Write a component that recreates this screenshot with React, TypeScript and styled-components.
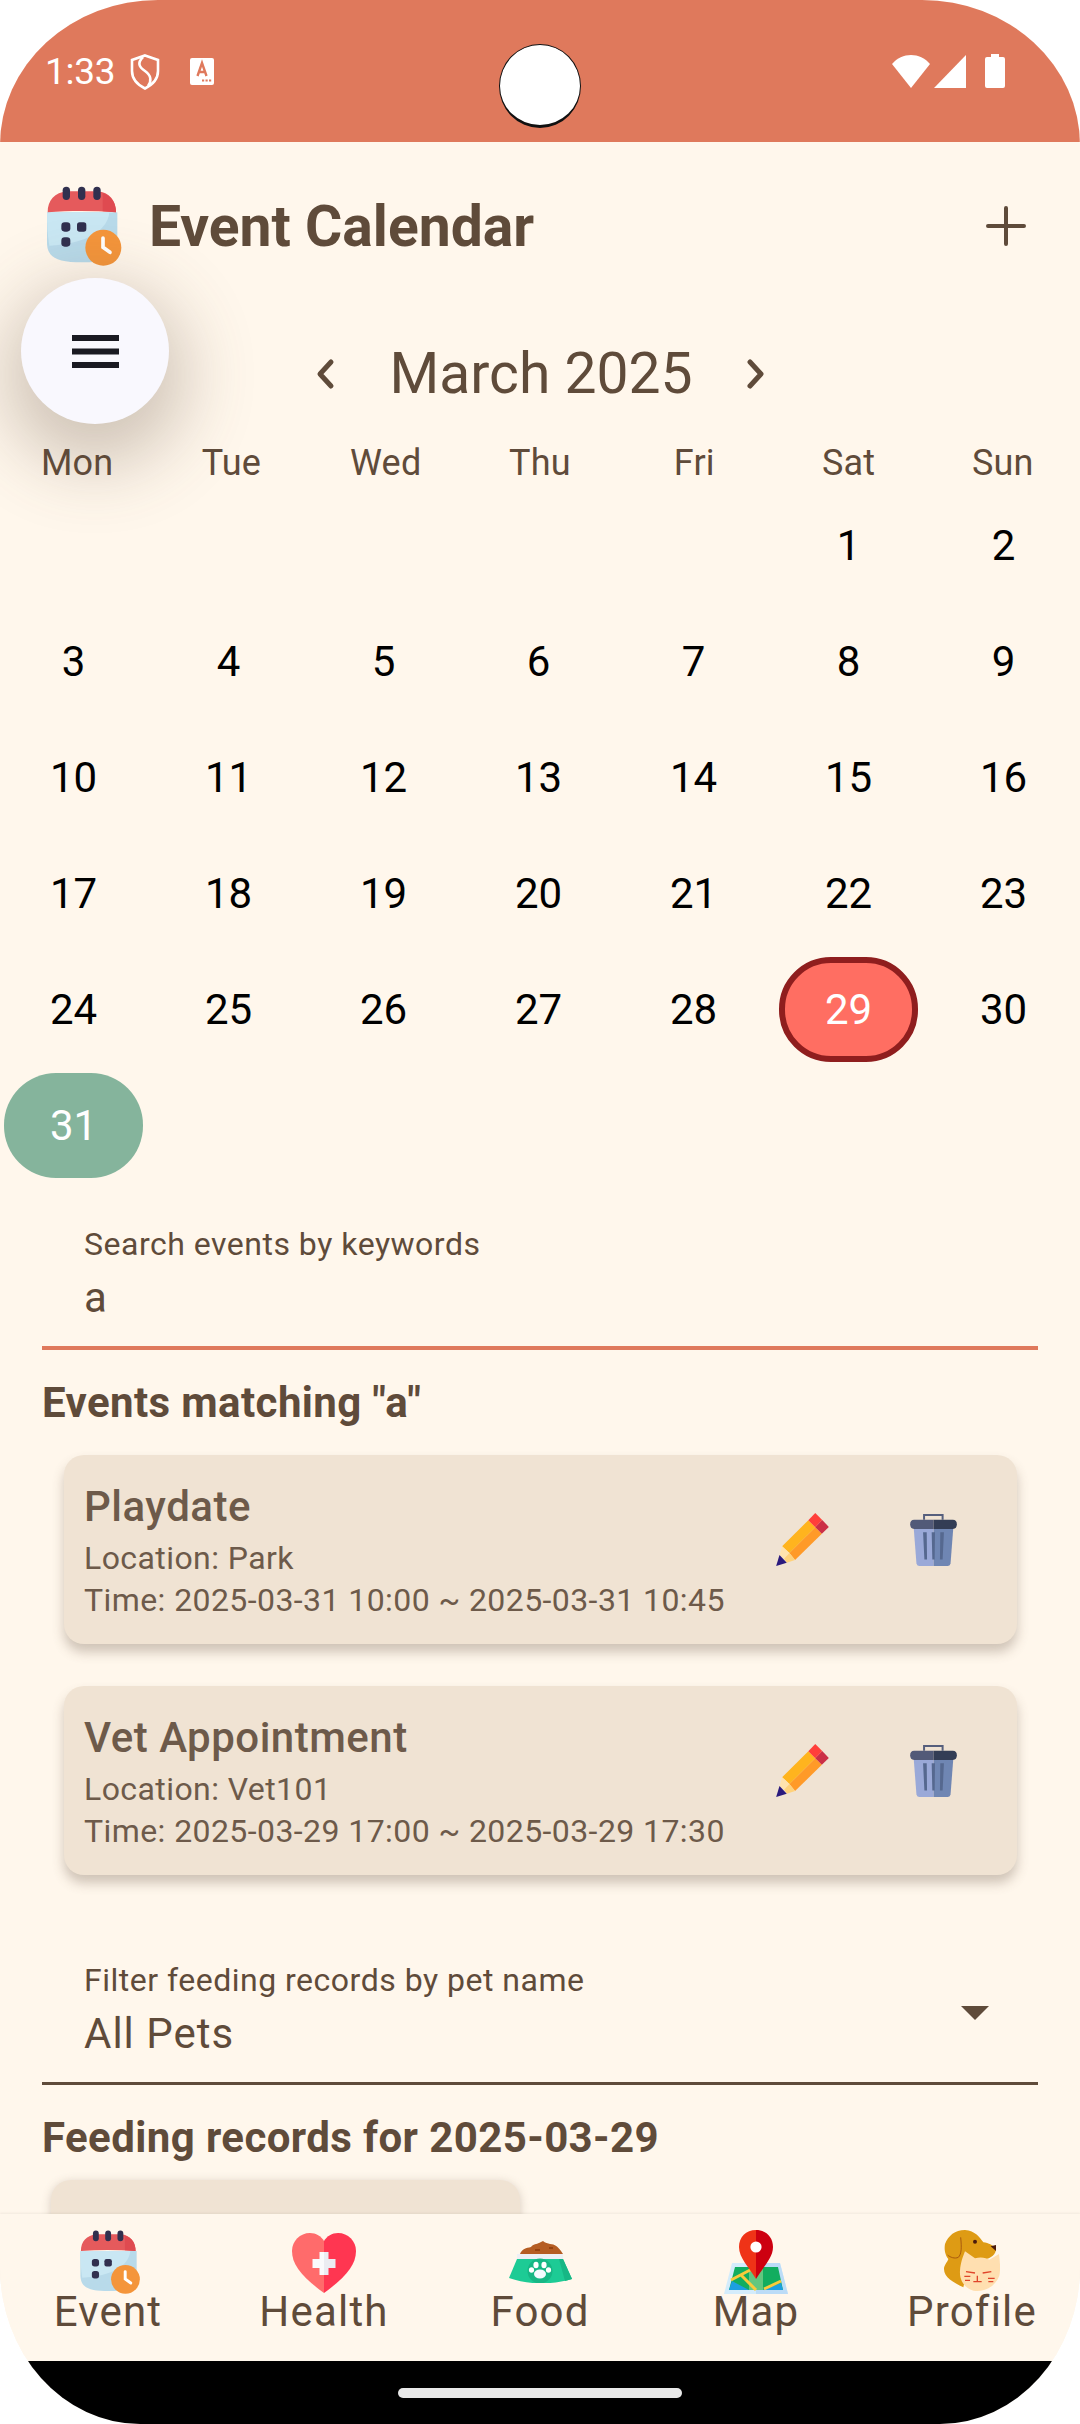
import { FC } from "react";
import styled, { createGlobalStyle } from "styled-components";

const GlobalStyle = createGlobalStyle`
  html, body {
    margin: 0;
    padding: 0;
    background: #fff;
  }
  body {
    font-family: Roboto, "Noto Sans", sans-serif;
  }
`;

const BROWN = "#5f4b3a";
const CORAL = "#df795c";
const CREAM = "#fff7ec";

const Phone = styled.div`
  position: relative;
  width: 1080px;
  height: 2424px;
  display: flex;
  flex-direction: column;
  overflow: hidden;
  background: ${CREAM};
  border-radius: 158px 158px 140px 140px / 145px 145px 157px 157px;
`;

const StatusBar = styled.div`
  position: relative;
  flex: 0 0 142px;
  display: flex;
  align-items: flex-start;
  justify-content: space-between;
  box-sizing: border-box;
  padding: 54px 75px 0 45px;
  background: ${CORAL};
  color: #fff;
`;

const StatusLeft = styled.div`
  display: flex;
  align-items: center;
  height: 35px;
`;

const Clock = styled.span`
  font-size: 37px;
  line-height: 35px;
  width: 85px;
  letter-spacing: -0.3px;
`;

const StatusRight = styled.div`
  display: flex;
  align-items: center;
`;

const ShieldSlot = styled.div`
  display: flex;
  width: 60px;
`;

const WifiSlot = styled.div`
  display: flex;
  width: 42px;
`;

const SignalSlot = styled.div`
  display: flex;
  width: 51px;
`;

const Camera = styled.div`
  position: absolute;
  left: 499px;
  top: 44px;
  width: 82px;
  height: 84px;
  box-sizing: border-box;
  border-radius: 50%;
  background: #fff;
  border: 1px solid #111;
  border-bottom-width: 3px;
`;

const Content = styled.main`
  flex: 1;
  min-height: 0;
  position: relative;
  overflow: hidden;
`;

const TopBar = styled.header`
  display: flex;
  align-items: center;
  height: 78px;
  margin-top: 45px;
  padding: 0 54px 0 46px;
`;

const AppTitle = styled.h1`
  flex: 1;
  margin: 1px 0 0 27px;
  font-size: 57px;
  font-weight: 700;
  line-height: 78px;
  color: ${BROWN};
`;

const MenuFab = styled.button`
  position: absolute;
  left: 21px;
  top: 136px;
  width: 148px;
  height: 146px;
  padding: 0;
  border: 0;
  border-radius: 50%;
  background: #f9f8fe;
  box-shadow: 0 24px 70px 16px rgba(95, 75, 58, 0.3);
  display: flex;
  align-items: center;
  justify-content: center;
`;

const MonthRow = styled.div`
  display: flex;
  align-items: center;
  justify-content: center;
  height: 80px;
  margin-top: 69px;
  gap: 52px;
`;

const MonthName = styled.div`
  font-size: 57px;
  line-height: 80px;
  color: ${BROWN};
  width: 301px;
  text-align: center;
  white-space: nowrap;
`;

const WeekRow = styled.div`
  display: grid;
  grid-template-columns: repeat(7, 1fr);
  margin-top: 26px;
  font-size: 36px;
  line-height: 46px;
  letter-spacing: 0.2px;
  color: ${BROWN};
  text-align: center;
`;

const DayGrid = styled.div`
  display: grid;
  grid-template-columns: repeat(7, 155px);
  grid-auto-rows: 116px;
  margin: 1px 0 0 -4px;
`;

const DayCell = styled.div`
  display: flex;
  align-items: center;
  justify-content: center;
`;

const Day = styled.div<{ $variant?: "selected" | "today" }>`
  width: 139px;
  height: 105px;
  box-sizing: border-box;
  display: flex;
  align-items: center;
  justify-content: center;
  font-size: 42px;
  border-radius: 52px;
  color: ${(p) => (p.$variant ? "#fff" : "#000")};
  background: ${(p) =>
    p.$variant === "selected" ? "#ff6e62" : p.$variant === "today" ? "#85b49c" : "transparent"};
  border: ${(p) => (p.$variant === "selected" ? "6px solid #8f1e1e" : "0")};
`;

const Field = styled.div<{ $tone: string; $line: number; $top: number }>`
  position: relative;
  margin: ${(p) => p.$top}px 42px 0;
  padding: 0 42px;
  height: 123px;
  border-bottom: ${(p) => p.$line}px solid ${(p) => p.$tone};
  color: ${BROWN};
`;

const FieldLabel = styled.div`
  font-size: 32px;
  line-height: 42px;
  letter-spacing: 0.5px;
`;

const FieldValue = styled.div`
  margin-top: 6px;
  font-size: 42px;
  line-height: 54px;
  letter-spacing: 1px;
`;

const Caret = styled.div`
  position: absolute;
  right: 49px;
  top: 47px;
  width: 0;
  height: 0;
  border-left: 14px solid transparent;
  border-right: 14px solid transparent;
  border-top: 14px solid ${BROWN};
`;

const SectionTitle = styled.h2<{ $top: number }>`
  margin: ${(p) => p.$top}px 42px 0;
  font-size: 42px;
  font-weight: 700;
  line-height: 56px;
  letter-spacing: 0.4px;
  color: ${BROWN};
`;

const CardList = styled.div`
  display: flex;
  flex-direction: column;
  gap: 42px;
  margin: 24px 63px 0 64px;
`;

const Card = styled.article`
  display: flex;
  align-items: flex-start;
  height: 189px;
  box-sizing: border-box;
  padding: 26px 60px 0 20px;
  border-radius: 20px;
  background: #f0e3d3;
  box-shadow: 0 8px 12px rgba(95, 75, 58, 0.3);
  color: #6d5a4a;
`;

const CardBody = styled.div`
  flex: 1;
`;

const CardTitle = styled.div`
  margin-bottom: 4px;
  font-size: 42px;
  font-weight: 500;
  line-height: 52px;
  letter-spacing: 0.5px;
`;

const CardLine = styled.div`
  font-size: 32px;
  line-height: 42px;
  letter-spacing: 0.42px;
`;

const CardActions = styled.div`
  display: flex;
  align-items: center;
  margin-top: 32px;
  gap: 81px;
`;

const FeedingCard = styled.div`
  width: 469px;
  height: 100px;
  margin: 14px 0 0 51px;
  border-radius: 20px;
  background: #f0e3d3;
  box-shadow: 0 2px 10px rgba(95, 75, 58, 0.25);
`;

const BottomNav = styled.nav`
  position: relative;
  flex: 0 0 147px;
  display: grid;
  grid-template-columns: repeat(5, 216px);
  background: ${CREAM};
  box-shadow: 0 -1px 2px rgba(95, 75, 58, 0.08);
`;

const NavItem = styled.div`
  display: flex;
  flex-direction: column;
  align-items: center;
  padding-top: 16px;
  font-size: 42px;
  line-height: 48px;
  letter-spacing: 1.2px;
  color: ${BROWN};
`;

const NavIcon = styled.div<{ $top?: number; $left?: number }>`
  display: flex;
  height: ${(p) => 64 - (p.$top ?? 0)}px;
  padding-top: ${(p) => p.$top ?? 0}px;
  margin-left: ${(p) => p.$left ?? 0}px;
  margin-bottom: -6px;
`;

const GestureBar = styled.div`
  flex: 0 0 63px;
  display: flex;
  align-items: flex-start;
  justify-content: center;
  background: #000;
`;

const HomeHandle = styled.div`
  width: 284px;
  height: 10px;
  margin-top: 27px;
  border-radius: 5px;
  background: #e8e8e8;
`;

const CalendarIcon: FC<{ width: number; height: number }> = ({ width, height }) => (
  <svg width={width} height={height} viewBox="80 76 228 240">
    <path d="M83 155H294V245C294 290 270 305 190 305C110 305 83 290 83 245Z" fill="#b8daea" />
    <path d="M83 155H270C265 210 200 250 90 255C84 220 83 190 83 155Z" fill="#c9e7f3" />
    <path d="M85 155C85 120 105 95 145 92H235C270 95 290 120 290 155C220 150 150 150 85 155Z" fill="#e55a5c" />
    <path d="M250 97C275 105 290 125 290 155L250 152Z" fill="#df4a50" />
    <rect x="130" y="78" width="22" height="40" rx="11" fill="#31304f" />
    <rect x="176" y="78" width="22" height="40" rx="11" fill="#31304f" />
    <rect x="222" y="78" width="22" height="40" rx="11" fill="#31304f" />
    <rect x="126" y="185" width="27" height="28" rx="10" fill="#31304f" />
    <rect x="173" y="185" width="28" height="28" rx="8" fill="#31304f" />
    <rect x="126" y="230" width="27" height="28" rx="10" fill="#31304f" />
    <circle cx="252" cy="261" r="54" fill="#f4953b" />
    <path d="M251 232V260L272 275" fill="none" stroke="#fff" strokeWidth="11" strokeLinecap="round" />
  </svg>
);

const HeartIcon = () => (
  <svg width="64" height="60" viewBox="0 0 64 60">
    <path d="M32 60C10 44 0 32 0 18 0 8 8 0 18 0c6 0 11 3 14 8z" fill="#ff6b6b" />
    <path d="M32 60c22-16 32-28 32-42C64 8 56 0 46 0c-6 0-11 3-14 8z" fill="#ff3651" />
    <path d="M27.500 19h4.500v23h-4.500v-7h-7v-9h7z" fill="#fafafc" />
    <path d="M32 19h4.500v7h7v9h-7v7H32z" fill="#ebecf2" />
  </svg>
);

const BowlIcon = () => (
  <svg width="63" height="42" viewBox="0 0 63 42">
    <path d="M11 13C13 8 17 7 22 6 24 3 28 3 30 2L34 0C36 2 39 2 41 3 46 3 49 6 52 10L54 13Z" fill="#b55d23" />
    <path d="M26 8h5v2h-5zM40 6h4v2h-4z" fill="#96420f" />
    <rect x="8" y="13" width="46" height="5" fill="#eef0f5" />
    <path d="M8 18H54L63 38C42 44 20 44 0 37Z" fill="#1dcb95" />
    <path d="M50 18H54L63 38 56 40Z" fill="#17b785" />
    <circle cx="31" cy="30" r="12.500" fill="#17b785" />
    <ellipse cx="27" cy="24" rx="2.600" ry="3.200" fill="#fff" />
    <ellipse cx="35" cy="24" rx="2.600" ry="3.200" fill="#fff" />
    <ellipse cx="22.500" cy="29" rx="2.600" ry="2.800" fill="#fff" />
    <ellipse cx="39.500" cy="29" rx="2.600" ry="2.800" fill="#fff" />
    <ellipse cx="31" cy="33" rx="6" ry="4.500" fill="#f4fbff" />
  </svg>
);

const MapIcon = () => (
  <svg width="64" height="64" viewBox="0 0 64 64">
    <path d="M8 33h48l8 31H0z" fill="#d4ecfb" />
    <path d="M32 33h24l8 31H32z" fill="#bcdcf7" />
    <path d="M11 37h43l5 23H5z" fill="#12ad5f" />
    <path d="M8 51l17 9H5zM38 60l19-7 2 7z" fill="#1c9fe0" />
    <path d="M25 38h14v22H25z" fill="#62c77f" />
    <path d="M7 50l21-11M17 45l15 15M40 59l17-8" stroke="#f9cb3c" strokeWidth="3" fill="none" />
    <path d="M32 0c-10 0-17 7-17 17 0 11 10 20 17 32z" fill="#ef3317" />
    <path d="M32 0c10 0 17 7 17 17 0 11-10 20-17 32z" fill="#cd0010" />
    <circle cx="32" cy="17" r="5.600" fill="#fff" />
  </svg>
);

const PetIcon = () => (
  <svg width="56" height="62" viewBox="72 33 168 186">
    <path
      d="M75 75C85 50 105 33 135 33C165 35 180 55 190 70C205 72 222 80 228 90C228 105 215 118 190 122L150 120L130 205C100 190 72 175 72 150C72 138 82 130 85 120C75 108 72 90 75 75Z"
      fill="#de9b14"
    />
    <path d="M122 55C125 85 125 105 115 115C105 120 90 115 83 108" fill="none" stroke="#a8590e" strokeWidth="3" />
    <circle cx="165" cy="68" r="6" fill="#4a1b0c" />
    <path d="M212 82L228 78V96Z" fill="#4a1b0c" />
    <path
      d="M135 97L165 118C185 112 200 118 208 122L237 105C240 130 242 150 238 170C225 205 190 220 160 215C130 205 118 180 120 155C122 130 128 115 135 97Z"
      fill="#ffdfb0"
    />
    <path
      d="M138 158L165 162M188 162L214 158M172 170V188M160 188H185M133 172H151M135 184H150M204 178H224M205 188H220"
      stroke="#e0452a"
      strokeWidth="4"
      fill="none"
    />
  </svg>
);

const PencilIcon = () => (
  <svg width="53" height="53" viewBox="108 98 159 160">
    <path d="M205 120L226 141 148 219 126 198Z" fill="#ffb41e" />
    <path d="M226 141L246 161 165 240 148 219Z" fill="#ff9a28" />
    <path d="M205 120L226 98 247 119 226 141Z" fill="#ff3f3a" />
    <path d="M247 119L267 140 246 161 226 141Z" fill="#cb2f46" />
    <path d="M126 198L148 219 132 236 118 225Z" fill="#ffe3ae" />
    <path d="M148 219L165 240 140 248 132 236Z" fill="#ffd27a" />
    <path d="M118 225L140 248 108 258Z" fill="#2a1a7d" />
  </svg>
);

const TrashIcon = () => (
  <svg width="47" height="53" viewBox="510 98 141 160">
    <path d="M521 146H581V258H537Q530 258 529 250Z" fill="#9aa9d8" />
    <path d="M581 146H640L632 250Q631 258 624 258H581Z" fill="#6f86b3" />
    <path d="M552 118V104H608V118" fill="none" stroke="#565f7d" strokeWidth="6" />
    <path d="M522 118H581V146H522Q510 146 510 132T522 118Z" fill="#525a78" />
    <path d="M581 118H639Q651 118 651 132T639 146H581Z" fill="#333d55" />
    <path d="M549 156H560L561 238H553ZM575 156H585L584 238H577ZM601 156H612L608 238H600Z" fill="#55688f" />
  </svg>
);

const Chevron: FC<{ dir: "left" | "right" }> = ({ dir }) => (
  <svg width="24" height="34" viewBox="0 0 24 34">
    <path
      d={dir === "left" ? "M17 5L6 17l11 12" : "M7 5l11 12L7 29"}
      fill="none"
      stroke={BROWN}
      strokeWidth="5"
      strokeLinecap="round"
      strokeLinejoin="round"
    />
  </svg>
);

const days = Array.from({ length: 31 }, (_, i) => i + 1);
const weekNames = ["Mon", "Tue", "Wed", "Thu", "Fri", "Sat", "Sun"];

const EventCard: FC<{ title: string; location: string; time: string }> = ({ title, location, time }) => (
  <Card>
    <CardBody>
      <CardTitle>{title}</CardTitle>
      <CardLine>Location: {location}</CardLine>
      <CardLine>Time: {time}</CardLine>
    </CardBody>
    <CardActions>
      <PencilIcon />
      <TrashIcon />
    </CardActions>
  </Card>
);

const App: FC = () => {
  return (
    <>
      <GlobalStyle />
      <Phone>
        <StatusBar>
          <StatusLeft>
            <Clock>1:33</Clock>
            <ShieldSlot>
              <svg width="30" height="36" viewBox="0 0 30 36">
                <path d="M15 1.500l13 4.500v11c0 8-6 14-13 17.500C8 31 2 25 2 17V6z" fill="none" stroke="#fff" strokeWidth="2.600" />
                <path d="M13 3C7 9 9 13 15 17c6 4 7 10 3 15" fill="none" stroke="#fff" strokeWidth="2.600" />
              </svg>
            </ShieldSlot>
            <svg width="24" height="27" viewBox="0 0 24 27">
              <path d="M2 0h20a2 2 0 0 1 2 2v23a2 2 0 0 1-2 2H2a2 2 0 0 1-2-2V2a2 2 0 0 1 2-2z" fill="#fff" />
              <path d="M7.500 18l4.500-13 4.500 13M9 14h6" fill="none" stroke="#df795c" strokeWidth="2.400" />
              <path d="M12 22.500h2.200M15.500 22.500h2.200M19 22.500h2.200" stroke="#df795c" strokeWidth="2.200" />
            </svg>
          </StatusLeft>
          <Camera />
          <StatusRight>
            <WifiSlot>
              <svg width="38" height="33" viewBox="0 0 38 33">
                <path d="M19 33L0 9C5 3 12 0 19 0S33 3 38 9Z" fill="#fff" />
              </svg>
            </WifiSlot>
            <SignalSlot>
              <svg width="32" height="33" viewBox="0 0 32 33">
                <path d="M32 0V33H0Z" fill="#fff" />
              </svg>
            </SignalSlot>
            <svg width="20" height="34" viewBox="0 0 20 34">
              <path d="M6 0h8v3h4a2 2 0 0 1 2 2v27a2 2 0 0 1-2 2H2a2 2 0 0 1-2-2V5a2 2 0 0 1 2-2h4z" fill="#fff" />
            </svg>
          </StatusRight>
        </StatusBar>

        <Content>
          <TopBar>
            <CalendarIcon width={76} height={80} />
            <AppTitle>Event Calendar</AppTitle>
            <svg width="40" height="40" viewBox="0 0 40 40">
              <path d="M20 2v36M2 20h36" stroke={BROWN} strokeWidth="4" strokeLinecap="round" />
            </svg>
          </TopBar>

          <MonthRow>
            <Chevron dir="left" />
            <MonthName>March 2025</MonthName>
            <Chevron dir="right" />
          </MonthRow>

          <WeekRow>
            {weekNames.map((name) => (
              <div key={name}>{name}</div>
            ))}
          </WeekRow>

          <DayGrid>
            {/* March 2025 starts on a Saturday */}
            <DayCell />
            <DayCell />
            <DayCell />
            <DayCell />
            <DayCell />
            {days.map((d) => (
              <DayCell key={d}>
                <Day $variant={d === 29 ? "selected" : d === 31 ? "today" : undefined}>{d}</Day>
              </DayCell>
            ))}
          </DayGrid>

          <Field $tone={CORAL} $line={4} $top={40}>
            <FieldLabel>Search events by keywords</FieldLabel>
            <FieldValue>a</FieldValue>
          </Field>

          <SectionTitle $top={25}>Events matching "a"</SectionTitle>

          <CardList>
            <EventCard title="Playdate" location="Park" time="2025-03-31 10:00 ~ 2025-03-31 10:45" />
            <EventCard title="Vet Appointment" location="Vet101" time="2025-03-29 17:00 ~ 2025-03-29 17:30" />
          </CardList>

          <Field $tone={BROWN} $line={3} $top={84}>
            <FieldLabel>Filter feeding records by pet name</FieldLabel>
            <FieldValue>All Pets</FieldValue>
            <Caret />
          </Field>

          <SectionTitle $top={25}>Feeding records for 2025-03-29</SectionTitle>
          <FeedingCard />

          <MenuFab aria-label="menu">
            <svg width="47" height="33" viewBox="0 0 47 33">
              <path d="M0 3h47M0 16.500h47M0 30h47" stroke="#1a1a22" strokeWidth="6" />
            </svg>
          </MenuFab>
        </Content>

        <BottomNav>
          <NavItem>
            <NavIcon $left={4}>
              <CalendarIcon width={62} height={64} />
            </NavIcon>
            Event
          </NavItem>
          <NavItem>
            <NavIcon $top={3}>
              <HeartIcon />
            </NavIcon>
            Health
          </NavItem>
          <NavItem>
            <NavIcon $top={11}>
              <BowlIcon />
            </NavIcon>
            Food
          </NavItem>
          <NavItem>
            <NavIcon>
              <MapIcon />
            </NavIcon>
            Map
          </NavItem>
          <NavItem>
            <NavIcon>
              <PetIcon />
            </NavIcon>
            Profile
          </NavItem>
        </BottomNav>
        <GestureBar>
          <HomeHandle />
        </GestureBar>
      </Phone>
    </>
  );
};

export default App;
